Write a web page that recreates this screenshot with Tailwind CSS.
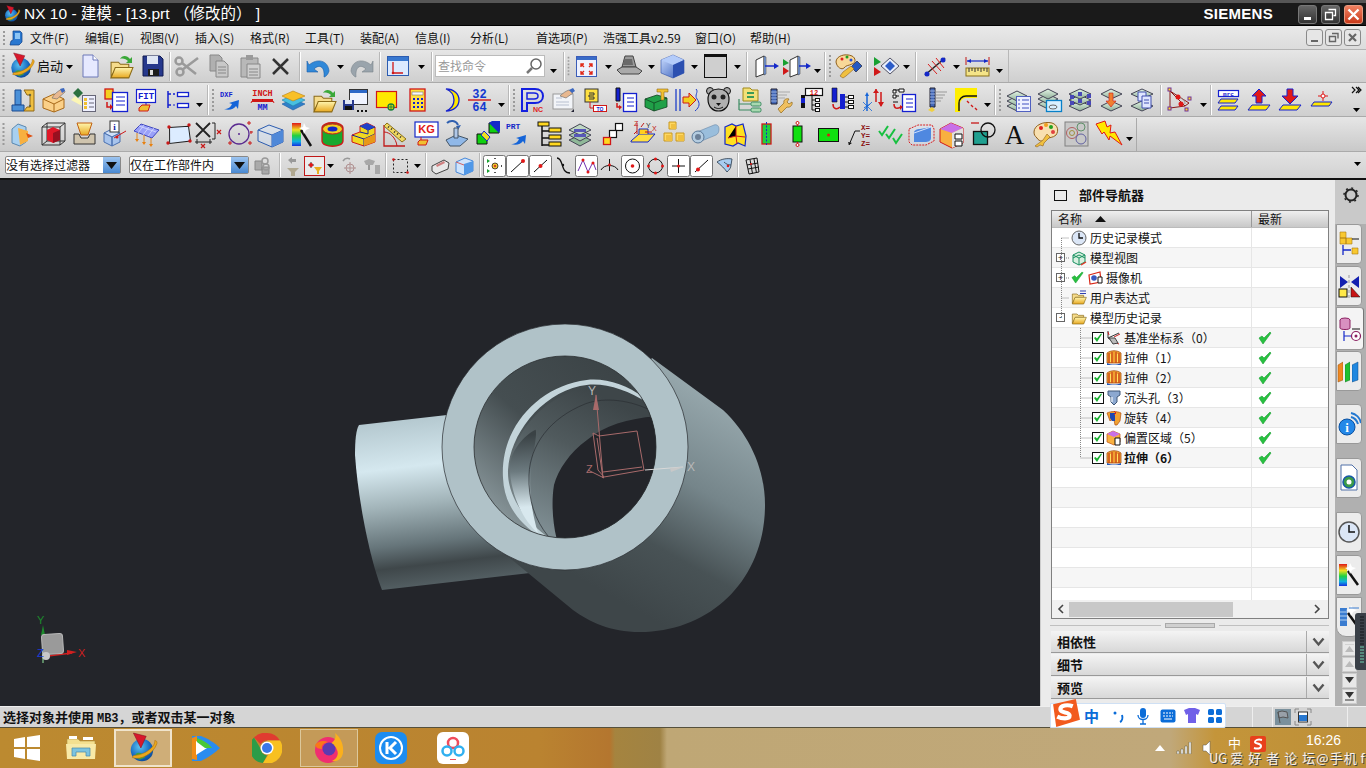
<!DOCTYPE html>
<html lang="zh">
<head>
<meta charset="UTF-8">
<title>NX 10 - 建模</title>
<script src="https://cdn.jsdelivr.net/npm/@tailwindcss/browser@4"></script>
</head>
<body class="bg-[#d8d8d8]">
<!-- shared icons -->
<svg width="0" height="0" class="absolute">
  <defs>
    <radialGradient id="gb" cx=".4" cy=".35" r=".8"><stop offset="0" stop-color="#5cc4f0"/><stop offset=".6" stop-color="#1466c0"/><stop offset="1" stop-color="#0a3c80"/></radialGradient>
    <linearGradient id="gy" x1="0" y1="0" x2="0" y2="1"><stop offset="0" stop-color="#fff6b0"/><stop offset="1" stop-color="#e8a820"/></linearGradient>
    <linearGradient id="gl" x1="0" y1="0" x2="1" y2="1"><stop offset="0" stop-color="#cfe0ff"/><stop offset="1" stop-color="#3058b8"/></linearGradient>
    <linearGradient id="gs" x1="0" y1="0" x2="0" y2="1"><stop offset="0" stop-color="#e4f6e6"/><stop offset="1" stop-color="#8fae98"/></linearGradient>
    <linearGradient id="rb" x1="0" y1="0" x2="0" y2="1"><stop offset="0" stop-color="#e01818"/><stop offset=".3" stop-color="#f0e020"/><stop offset=".55" stop-color="#20d040"/><stop offset=".8" stop-color="#10b0e0"/><stop offset="1" stop-color="#1430e0"/></linearGradient>
    <symbol id="nx" viewBox="0 0 30 30">
      <circle cx="14" cy="17" r="10.500" fill="url(#gb)"/><path d="M8 21c3-3 7-1 9 3l-5 2c-3-1-4-3-4-5z" fill="#3fa040"/>
      <path d="M5 24c8 3 20-4 23-13 .5-2-.5-3-2-3 1 6-10 14-20 14z" fill="#eaa81c" stroke="#a86c10" stroke-width=".5"/>
      <path d="M6 1l12 3-5 11z" fill="#d8182c" stroke="#801020" stroke-width=".5"/>
    </symbol>
    <symbol id="fo" viewBox="0 0 24 24">
      <path d="M2 20V6h7l2 2h8v3H7z" fill="#f6dc8c" stroke="#8a6a18"/><path d="M2 21l4-10h17l-4 10z" fill="url(#gy)" stroke="#8a6a18"/>
    </symbol>
    <symbol id="ex" viewBox="0 0 16 16">
      <path d="M1 3c4-3 10-3 14 0v10H1z" fill="#f0a030" stroke="#a85010" stroke-width=".8"/><path d="M3 3v10M6 2v11M10 2v11M13 3v10" stroke="#c02c10"/><path d="M1 13c4 2 10 2 14 0v2H1z" fill="#2458b8"/><path d="M4 4h1v8H4zM11 4h1v8h-1z" fill="#ffe060"/>
    </symbol>
    <symbol id="ck" viewBox="0 0 14 14"><path d="M1 7l4 6 8-11-1-1-6 6-2-2z" fill="#28c040" stroke="#18a030" stroke-width=".6"/></symbol>
    <symbol id="cb" viewBox="0 0 12 12"><rect x=".5" y=".5" width="11" height="11" fill="#fff" stroke="#111"/><path d="M2 6l3 4 5-8-1-.5-4 5-1.500-1.500z" fill="#18b030"/></symbol>
    <symbol id="bx" viewBox="0 0 23 27"><rect x=".5" y="3.500" width="22" height="21" rx="2" fill="#fff" stroke="#777"/></symbol>
    <symbol id="sg" viewBox="0 0 30 30">
      <path d="M3 6l22-5 4 20-23 7z" fill="#f25a1e"/><path d="M22 8c-5-2-12-1-12 3s9 2 9 6-8 3-12 1" fill="none" stroke="#fff" stroke-width="4"/>
    </symbol>
    <symbol id="dt" viewBox="0 0 6 32"><path d="M3 5v23" stroke="#9a9a9a" stroke-width="2" stroke-dasharray="2 2"/></symbol>
  </defs>
</svg>

<div class="relative w-[1366px] h-[768px] overflow-hidden flex flex-col font-['Noto_Sans_CJK_SC','Liberation_Sans',sans-serif] text-[12px] text-[#111]">

  <!-- title bar -->
  <div class="h-[26px] shrink-0 flex items-center bg-[#1a1a1a] border-t-[3px] border-[#565656] border-b border-b-black text-white">
    <svg width="18" height="18" class="ml-[3px] mr-[3px]"><use href="#nx"/></svg>
    <span class="font-['Liberation_Sans','Noto_Sans_CJK_SC',sans-serif] text-[15.5px]">NX 10 - 建模 - [13.prt （修改的） ]</span>
    <span class="ml-auto mr-[25px] font-['Liberation_Sans',sans-serif] font-bold text-[15px] tracking-[.3px]">SIEMENS</span>
    <div class="flex gap-[4px] mr-[3px]">
      <div class="w-[19px] h-[19px] rounded-[3px] bg-gradient-to-b from-[#666] to-[#333] border border-[#777] flex items-end justify-center pb-[3px]"><b class="block w-[7px] h-[3px] bg-white"></b></div>
      <div class="w-[19px] h-[19px] rounded-[3px] bg-gradient-to-b from-[#666] to-[#333] border border-[#777]"><svg width="17" height="17"><path d="M6.500 3.500h7v6h-2M3.500 6.500h7v7h-7z" fill="none" stroke="#fff" stroke-width="1.300"/></svg></div>
      <div class="w-[19px] h-[19px] rounded-[3px] bg-gradient-to-b from-[#f08060] to-[#c83818] border border-[#e89a80]"><svg width="17" height="17"><path d="M3.500 3.500l10 10M13.500 3.500l-10 10" stroke="#fff" stroke-width="2.400"/></svg></div>
    </div>
  </div>

  <!-- menu bar -->
  <div class="h-[24px] shrink-0 flex items-center bg-gradient-to-b from-[#e9e9e9] to-[#dcdcdc] border-b border-[#b4b4b4] *:shrink-0">
    <svg width="8" height="20" viewBox="0 0 6 20"><path d="M3 3v15" stroke="#9a9a9a" stroke-width="2" stroke-dasharray="2 2"/></svg>
    <svg width="16" height="16" viewBox="0 0 16 16" class="mr-[6px]"><path d="M5 1h7l2 2v9l-3 3H2l1-4 2-1z" fill="#2a78d0" stroke="#0e3f88" stroke-width=".7"/><path d="M7 3h5v6H7z" fill="#8cc4f4"/></svg>
    <span class="w-[55px]">文件(F)</span><span class="w-[55px]">编辑(E)</span><span class="w-[55px]">视图(V)</span><span class="w-[55px]">插入(S)</span><span class="w-[55px]">格式(R)</span><span class="w-[55px]">工具(T)</span><span class="w-[55px]">装配(A)</span><span class="w-[55px]">信息(I)</span><span class="w-[66px]">分析(L)</span><span class="w-[67px]">首选项(P)</span><span class="w-[92px]">浩强工具v2.59</span><span class="w-[55px]">窗口(O)</span><span>帮助(H)</span>
    <div class="ml-auto mr-[5px] flex gap-[2px] *:w-[17px] *:h-[17px] *:rounded-[3px] *:border *:border-[#8a8a8a] *:bg-[#e6e6e6]">
      <div><svg width="15" height="15"><path d="M4 11h7" stroke="#666" stroke-width="2"/></svg></div>
      <div><svg width="15" height="15"><path d="M6 3.500h6v5M3.500 6.500h6v5h-6z" fill="none" stroke="#666" stroke-width="1.400"/></svg></div>
      <div><svg width="15" height="15"><path d="M4 4l7 7M11 4l-7 7" stroke="#666" stroke-width="2.200"/></svg></div>
    </div>
  </div>

  <!-- toolbar row 1 -->
  <div class="h-[33px] shrink-0 flex items-center bg-gradient-to-b from-[#e6e6e6] to-[#cfcfcf] border-b border-[#aaa] *:shrink-0">
    <svg width="7" height="32"><use href="#dt"/></svg>
    <svg width="30" height="32" viewBox="0 0 30 32"><use href="#nx" x="1" y="2" width="28" height="28"/></svg>
    <span class="w-[26px] text-[13px]">启动</span>
    <svg width="12" height="32"><path d="M3 15h7l-3.500 4z"/></svg>
    <svg width="31" height="32"><path d="M8 5h10l5 5v17H8z" fill="#e6e9ff" stroke="#6c78b8"/><path d="M18 5v5h5" fill="#fff" stroke="#6c78b8"/></svg>
    <svg width="31" height="32"><use href="#fo" x="3" y="6" width="25" height="25"/><path d="M14 9c2-4 7-4 10 0l2-2v6h-6l2-2c-2-2-5-3-8-2z" fill="#3aa838"/></svg>
    <svg width="31" height="32"><path d="M6 6h17l3 3v17H6z" fill="#26388c" stroke="#111a50"/><path d="M10 6h11v8H10z" fill="#dfe6f4"/><path d="M11 19h11v7H11z" fill="#1c1c1c"/><path d="M13 20h3v5h-3z" fill="#ddd"/></svg>
    <div class="w-[4px] flex justify-center"><b class="block w-[2px] h-[29px] border-l border-[#b8b8b8] bg-white"></b></div>
    <svg width="31" height="32"><g fill="none" stroke="#9a9a9a" stroke-width="2.500"><circle cx="8" cy="22" r="3.500"/><circle cx="7" cy="11" r="3.500"/><path d="M10 20L26 8M10 13l14 11"/></g></svg>
    <svg width="31" height="32"><path d="M7 5h9l3 3v13H7z" fill="#b0b0b0" stroke="#888"/><path d="M13 11h8l4 4v12H13z" fill="#c8c8c8" stroke="#888"/><path d="M15 17h8M15 20h8M15 23h8" stroke="#888"/></svg>
    <svg width="31" height="32"><path d="M7 8h17v19H7z" fill="#b8b8b8" stroke="#888"/><path d="M12 5h7v5h-7z" fill="#9a9a9a"/><path d="M13 14h13v14H13z" fill="#cfcfcf" stroke="#888"/><path d="M15 19h9M15 22h9M15 25h9" stroke="#888"/></svg>
    <svg width="31" height="32"><path d="M8 9l15 15M23 9L8 24" stroke="#333" stroke-width="2.500"/></svg>
    <div class="w-[7px] flex justify-center"><b class="block w-[2px] h-[29px] border-l border-[#b8b8b8] bg-white"></b></div>
    <svg width="31" height="32"><path d="M26 21C25 10 14 8 6 15l-2-4v11h11l-4-3c5-5 11-3 10 8 1 0 4-2 5-6z" fill="#3088d8" stroke="#1a5ca8" stroke-width=".6"/></svg>
    <svg width="12" height="32"><path d="M3 15h7l-3.500 4z"/></svg>
    <svg width="31" height="32"><path d="M5 21C6 10 17 8 25 15l2-4v11H16l4-3c-5-5-11-3-10 8-1 0-4-2-5-6z" fill="#9aa4ac" stroke="#7a848c" stroke-width=".6"/></svg>
    <div class="w-[6px] flex justify-center"><b class="block w-[2px] h-[29px] border-l border-[#b8b8b8] bg-white"></b></div>
    <svg width="31" height="32"><rect x="4.500" y="6.500" width="21" height="19" fill="#dceaff" stroke="#2c5cb0"/><path d="M5 7h20v4H5z" fill="#3878d0"/><path d="M10 12v11h10" fill="none" stroke="#d01818" stroke-width="1.300"/><circle cx="10" cy="23" r="1.300" fill="#d01818"/></svg>
    <svg width="14" height="32"><path d="M4 15h7l-3.500 4z"/></svg>
    <div class="w-[7px] flex justify-center"><b class="block w-[2px] h-[29px] border-l border-[#b8b8b8] bg-white"></b></div>
    <div class="w-[110px] h-[22px] bg-white border border-[#bbb] flex items-center pl-[2px] justify-between text-[#999]">查找命令
      <svg width="20" height="20"><circle cx="12" cy="8" r="5" fill="#fff" stroke="#666" stroke-width="1.500"/><path d="M8 12l-5 5" stroke="#777" stroke-width="2.500"/></svg>
    </div>
    <svg width="16" height="32"><path d="M5 19h7l-3.500 4z"/></svg>
    <div class="w-[5px] flex justify-center"><b class="block w-[2px] h-[29px] border-l border-[#b8b8b8] bg-white"></b></div>
    <svg width="5" height="32" viewBox="0 0 6 32"><use href="#dt"/></svg>
    <svg width="31" height="32"><rect x="5.500" y="6.500" width="20" height="20" fill="#eef2ff" stroke="#3a5cb8"/><path d="M6 7h19v3H6z" fill="#3a6cc8"/><path d="M10 14l3 3m-3 0v-3h3M21 14l-3 3m3 0v-3h-3M10 24l3-3m-3 0v3h3M21 24l-3-3m3 0v3h-3" fill="none" stroke="#e02818" stroke-width="1.400"/></svg>
    <svg width="12" height="32"><path d="M3 15h7l-3.500 4z"/></svg>
    <svg width="31" height="32"><path d="M11 6h8l3 11H8z" fill="#9a9a9a" stroke="#444"/><path d="M3 20l5-3h14l6 4-3 3H7z" fill="#aaa" stroke="#444"/><path d="M10 9h8l1 6H9z" fill="#6a6a6a"/></svg>
    <svg width="12" height="32"><path d="M3 15h7l-3.500 4z"/></svg>
    <svg width="31" height="32"><path d="M4 10l12-5 11 5v13l-11 5-12-5z" fill="url(#gl)" stroke="#2c4ea8" stroke-width=".6"/><path d="M4 10l12 5 11-5-11-5z" fill="#b4ccfa"/><path d="M16 15v13l11-5V10z" fill="#2c50b0"/></svg>
    <svg width="12" height="32"><path d="M3 15h7l-3.500 4z"/></svg>
    <svg width="31" height="32"><rect x="4.500" y="4.500" width="22" height="23" fill="#cfcfcf" stroke="#111"/><path d="M4 4h23v3H4z" fill="#111"/></svg>
    <svg width="12" height="32"><path d="M3 15h7l-3.500 4z"/></svg>
    <div class="w-[7px] flex justify-center"><b class="block w-[2px] h-[29px] border-l border-[#b8b8b8] bg-white"></b></div>
    <svg width="31" height="32"><path d="M6 10l8-4v18l-8 3z" fill="#fff" stroke="#333"/><path d="M14 6l2 1v17l-2 1z" fill="#7ea4e8" stroke="#333" stroke-width=".5"/><path d="M15 16h11" stroke="#1428c8" stroke-width="1.500"/><path d="M24 13l5 3-5 3z" fill="#1428c8"/></svg>
    <svg width="31" height="32"><path d="M2 9l6 4-6 3z" fill="#18a030"/><path d="M2 17l6 4-6 4z" fill="#d01818"/><path d="M9 10l8-4v18l-8 3z" fill="#fff" stroke="#333"/><path d="M17 6l2 1v17l-2 1z" fill="#7ea4e8" stroke="#333" stroke-width=".5"/><path d="M18 16h9" stroke="#1428c8" stroke-width="1.500"/><path d="M25 13l5 3-5 3z" fill="#1428c8"/></svg>
    <svg width="11" height="32"><path d="M2 19h7l-3.500 4z"/></svg>
    <div class="w-[4px] flex justify-center"><b class="block w-[2px] h-[29px] border-l border-[#b8b8b8] bg-white"></b></div>
    <svg width="6" height="32"><use href="#dt"/></svg>
    <svg width="31" height="32"><path d="M3 12C3 6 12 3 19 6c4 2 4 7 0 8-4 2-6 1-8 4-2 2-7 0-8-6z" fill="#f8d898" stroke="#90601c"/><circle cx="9" cy="9" r="1.500" fill="#e02020"/><circle cx="14" cy="7" r="1.500" fill="#20a020"/><circle cx="18" cy="10" r="1.500" fill="#2050e0"/><path d="M18 17l6-6 5 5-6 6z" fill="#2458c0" stroke="#112" stroke-width=".6"/><path d="M10 22l8-6 3 3-8 7-3 2-3-2z" fill="#f0c040" stroke="#90601c" stroke-width=".6"/></svg>
    <div class="w-[5px] flex justify-center"><b class="block w-[2px] h-[29px] border-l border-[#b8b8b8] bg-white"></b></div>
    <svg width="31" height="32"><path d="M5 7l7 5-7 4z" fill="#18a030"/><path d="M5 17l7 5-7 4z" fill="#d01818"/><path d="M12 16l9-8 9 8-9 8z" fill="#e8eefc" stroke="#556"/><path d="M16 16l5-5 5 5-5 5z" fill="#2c5cc8"/></svg>
    <svg width="13" height="32"><path d="M3 15h7l-3.500 4z"/></svg>
    <div class="w-[6px] flex justify-center"><b class="block w-[2px] h-[29px] border-l border-[#b8b8b8] bg-white"></b></div>
    <svg width="31" height="32"><path d="M6 25L26 8" stroke="#222" stroke-width="1.500"/><path d="M9 14l9 10M13 11l9 10M17 8l8 10" stroke="#d82020"/><circle cx="24" cy="10" r="2.500" fill="#1428c8"/><circle cx="8" cy="24" r="2.500" fill="#1428c8"/></svg>
    <svg width="12" height="32"><path d="M3 15h7l-3.500 4z"/></svg>
    <svg width="31" height="32"><path d="M4 7v8M27 7v8" stroke="#c01818"/><path d="M5 11h21" stroke="#1428c8" stroke-width="1.200"/><path d="M5 11l4-2v4zM26 11l-4-2v4z" fill="#1428c8"/><rect x="4" y="18" width="23" height="8" fill="#f4e488" stroke="#8a7018"/><path d="M7 18v4M10 18v3M13 18v4M16 18v3M19 18v4M22 18v3M25 18v4" stroke="#333"/></svg>
    <svg width="12" height="32"><path d="M3 19h7l-3.500 4z"/></svg>
    <div class="w-[4px] h-[32px] border-r border-[#b8b8b8]"></div>
  </div>

  <!-- toolbar row 2 -->
  <div class="h-[34px] shrink-0 flex items-center bg-gradient-to-b from-[#e6e6e6] to-[#cfcfcf] border-b border-[#aaa] *:shrink-0">
    <svg width="7" height="32"><use href="#dt"/></svg>
    <svg width="31" height="32"><path d="M8 6h6v15H8z" fill="#4a90d8" stroke="#1a4a90"/><path d="M5 21h12v6H5z" fill="#4a90d8" stroke="#1a4a90"/><path d="M17 6h10v21H17l3-4h3V11h-3z" fill="#f0c040" stroke="#906818"/><circle cx="23" cy="11" r="1.200" fill="#664"/><circle cx="23" cy="22" r="1.200" fill="#664"/></svg>
    <svg width="31" height="32"><path d="M5 15l11-5 10 5v9l-10 4-11-4z" fill="#fbd088" stroke="#a86818"/><path d="M5 15l11 5 10-5M16 20v8" fill="none" stroke="#a86818"/><path d="M14 14c2-4 6-7 10-9 2 0 3 2 3 3l-8 7z" fill="#e8b890" stroke="#666" stroke-width=".6"/><path d="M22 5l4-1 1 3-3 2z" fill="#3c68c0"/></svg>
    <svg width="31" height="32"><path d="M4 9l5-5 5 5-5 5z" fill="#2c7040"/><path d="M6 12l10 8-1 3-13-7z" fill="#fff8b0" opacity=".9"/><rect x="13.500" y="11.500" width="13" height="16" fill="#eef0ff" stroke="#667"/><path d="M20 15h5M20 19h5M20 23h5" stroke="#667"/><path d="M15 14h3v3h-3zM15 18h3v3h-3zM15 22h3v3h-3z" fill="#f0c030"/></svg>
    <svg width="31" height="32"><rect x="5" y="5" width="8" height="10" fill="#f4d020" stroke="#d01818" stroke-width="1.300"/><rect x="12.500" y="8.500" width="15" height="19" fill="#fff" stroke="#1420d0" stroke-width="1.300"/><path d="M16 13h9M16 17h9M16 21h9" stroke="#1420d0"/><path d="M7 18v5h4" fill="none" stroke="#d01818" stroke-width="1.500"/><path d="M10 20l3 3-3 3z" fill="#d01818"/></svg>
    <svg width="31" height="32"><rect x="5.500" y="5.500" width="19" height="13" fill="#fff" stroke="#1420d0" stroke-width="1.200"/><text x="15" y="15" text-anchor="middle" font-size="9" font-family="Liberation Mono" font-weight="700" fill="#1420d0">FIT</text><path d="M15 18v5" stroke="#1420d0"/><path d="M8 24l3-3h8l-2 6H8z" fill="#f0c030" stroke="#d01818"/></svg>
    <svg width="31" height="32"><path d="M6 7v17M6 10h3M6 21h3" stroke="#1420d0" stroke-width="1.500"/><path d="M11 10h2M12 9v2" stroke="#1420d0"/><path d="M11 21h2" stroke="#1420d0"/><rect x="15.500" y="8.500" width="11" height="4" fill="#fff" stroke="#1420d0" stroke-width="1.300"/><rect x="15.500" y="19.500" width="11" height="4" fill="#fff" stroke="#1420d0" stroke-width="1.300"/></svg>
    <svg width="13" height="32"><path d="M3 19h7l-3.500 4z"/></svg>
    <div class="w-[4px] flex justify-center"><b class="block w-[2px] h-[30px] border-l border-[#b8b8b8] bg-white"></b></div>
    <svg width="6" height="32"><use href="#dt"/></svg>
    <svg width="31" height="32"><text x="4" y="13" font-size="7" font-family="Liberation Mono" font-weight="700" fill="#1420d0">DXF</text><path d="M8 25c4 0 7-2 8-5l-3-1 10-3-1 9-2-3c-2 3-7 5-12 3z" fill="#1464d8"/></svg>
    <svg width="31" height="32"><text x="15.500" y="12" text-anchor="middle" font-size="8.500" font-family="Liberation Mono" font-weight="700" fill="#d01818">INCH</text><path d="M5 15h21v3H5z" fill="#d01818"/><path d="M5 17l-1 2M26 17l1 2" stroke="#d01818"/><text x="15.500" y="26" text-anchor="middle" font-size="8.500" font-family="Liberation Mono" font-weight="700" fill="#1420d0">MM</text></svg>
    <svg width="31" height="32"><path d="M4 20l11-5 12 5-12 6z" fill="#3080c8" stroke="#1a5ca8" stroke-width=".6"/><path d="M4 16l11-5 12 5-12 6z" fill="#48c0e0" stroke="#1a80a8" stroke-width=".6"/><path d="M4 12l11-5 12 5-12 5z" fill="#f8c028" stroke="#b88010" stroke-width=".6"/></svg>
    <svg width="31" height="32"><use href="#fo" x="3" y="6" width="25" height="25"/><path d="M14 9c2-4 7-4 10 0l2-2v6h-6l2-2c-2-2-5-3-8-2z" fill="#3aa838"/></svg>
    <svg width="31" height="32"><rect x="9.500" y="5.500" width="18" height="15" fill="#f0f4ff" stroke="#333"/><path d="M10 6h17v3H10z" fill="#2c68c8"/><path d="M3 16h11v10H3z" fill="#26388c"/><path d="M5 16h7v4H5z" fill="#dfe6f4"/><path d="M5 22h7v4H5z" fill="#111"/><path d="M17 26h2v2h-2zM21 26h2v2h-2zM25 26h2v2h-2z" fill="#111"/></svg>
    <svg width="31" height="32"><rect x="5.500" y="7.500" width="20" height="16" fill="#ffe800" stroke="#d01818" stroke-width="1.200"/><circle cx="20" cy="23" r="3" fill="#ffe800" stroke="#18803c" stroke-width="1.300"/><path d="M17 23h6M20 20v6" stroke="#18803c"/></svg>
    <svg width="31" height="32"><rect x="8" y="5" width="15" height="22" fill="#ffe040" stroke="#d01818" stroke-width="1.300"/><rect x="10" y="8" width="11" height="3" fill="#f8f8f8" stroke="#777" stroke-width=".6"/><path d="M11 14h2v2h-2zM15 14h2v2h-2zM19 14h2v2h-2zM11 18h2v2h-2zM15 18h2v2h-2zM19 18h2v2h-2zM11 22h2v2h-2zM15 22h2v2h-2zM19 22h2v2h-2z" fill="#1420d0"/></svg>
    <svg width="31" height="32"><path d="M13 5c8 0 13 5 13 11s-5 11-13 11c5-2 8-6 8-11s-3-9-8-11z" fill="#ffe800" stroke="#1420d0" stroke-width="1.300"/></svg>
    <svg width="31" height="32"><text x="15.500" y="14" text-anchor="middle" font-size="12" font-family="Liberation Mono" font-weight="700" fill="#1438d0">32</text><path d="M4 16h23" stroke="#d01818" stroke-width="1.400"/><text x="15.500" y="27" text-anchor="middle" font-size="12" font-family="Liberation Mono" font-weight="700" fill="#1438d0">64</text></svg>
    <svg width="12" height="32"><path d="M3 19h7l-3.500 4z"/></svg>
    <div class="w-[4px] flex justify-center"><b class="block w-[2px] h-[30px] border-l border-[#b8b8b8] bg-white"></b></div>
    <svg width="6" height="32"><use href="#dt"/></svg>
    <svg width="31" height="32"><path d="M5 27V5h13c5 0 8 3 8 7s-3 7-8 7h-8v8z" fill="none" stroke="#1420e0" stroke-width="2"/><path d="M10 9h7c3 0 4 1 4 3s-1 3-4 3h-7z" fill="none" stroke="#1420e0" stroke-width="1.500"/><text x="16" y="28" font-size="7" font-family="Liberation Sans" font-weight="700" fill="#e02020">NC</text></svg>
    <svg width="31" height="32"><rect x="5" y="10" width="20" height="15" fill="#f2f4f8" stroke="#999"/><path d="M8 14h6M8 18h13M8 21h13" stroke="#b8c0d0"/><path d="M12 12c3-3 6-5 9-6l4 3-7 5z" fill="#e8b890" stroke="#666" stroke-width=".6"/><path d="M21 6l4-2 2 3-3 2z" fill="#3c68c0"/><path d="M26 25l-3 3h3z" fill="#223"/></svg>
    <svg width="31" height="32"><rect x="6" y="5" width="13" height="13" fill="#ffe040" stroke="#333"/><path d="M10 9h5v2h-5v2h5v2h-5" fill="none" stroke="#333"/><path d="M11 18v6h3" stroke="#d01818" fill="none"/><rect x="14.500" y="21.500" width="13" height="6" fill="#fff" stroke="#d01818"/><text x="21" y="26.500" text-anchor="middle" font-size="5" font-weight="700" font-family="Liberation Sans" fill="#1420d0">TO</text></svg>
    <svg width="31" height="32"><path d="M6 4h4v13H6z" fill="#1420d0" stroke="#111"/><path d="M7 19v4h3" stroke="#d01818" fill="none" stroke-width="1.500"/><path d="M9 21l3 2-3 3z" fill="#d01818"/><rect x="13.500" y="9.500" width="13" height="18" fill="#fff" stroke="#1420d0" stroke-width="1.300"/><path d="M17 14h7M17 18h7M17 22h7" stroke="#1420d0"/></svg>
    <svg width="31" height="32"><path d="M4 15l12-4 10 3v9l-13 4-9-4z" fill="#20a048" stroke="#104020" stroke-width=".8"/><path d="M4 15l9 4 13-5M13 19v8" fill="none" stroke="#104020" stroke-width=".8"/><path d="M16 5h11v3h-4v8h-3V8h-4z" fill="#f0c030" stroke="#906818" stroke-width=".6"/></svg>
    <svg width="31" height="32"><path d="M4 5v22M8 5v22" stroke="#2040c8" stroke-width="1.300"/><path d="M11 13h6V9l7 7-7 7v-4h-6z" fill="#f0d020" stroke="#d01818"/><path d="M24 5c3 3-2 6 1 10s3 8-2 12" fill="none" stroke="#2040c8"/></svg>
    <svg width="31" height="32"><circle cx="7" cy="7" r="3.500" fill="#aaa" stroke="#111"/><circle cx="24" cy="7" r="3.500" fill="#aaa" stroke="#111"/><path d="M5 15C5 8 10 5 15.500 5S26 8 26 15c0 8-5 12-10.500 12S5 23 5 15z" fill="#b0b0b0" stroke="#111" stroke-width="1.200"/><circle cx="11" cy="13" r="2.500" fill="#222"/><circle cx="20" cy="13" r="2.500" fill="#222"/><path d="M13 19h5l-2.500 3z" fill="#111"/><path d="M11 23c3 2 6 2 9 0" stroke="#111" fill="none"/></svg>
    <svg width="31" height="32"><path d="M9 4h7l2 2h6v11H9z" fill="#f2e078" stroke="#a08818"/><path d="M13 8h7v2h-7zM13 12h7v2h-7z" fill="#3a9a58"/><path d="M5 15v11M5 20h12M5 26h12" stroke="#3a8a60" stroke-width="1.200"/><rect x="17" y="18" width="10" height="4" rx="1.500" fill="#a8d8b0" stroke="#3a8a60"/><rect x="17" y="24" width="10" height="4" rx="1.500" fill="#a8d8b0" stroke="#3a8a60"/></svg>
    <svg width="31" height="32"><path d="M6 5h6v15H6z" fill="#4468b8" stroke="#223"/><path d="M6 8h6M6 11h6M6 14h6M6 17h6" stroke="#98b0e0"/><path d="M13 8h12M13 11h9M13 14h7" stroke="#aaa"/><path d="M13 25l6-6c-1-3 2-5 5-4l-2 3 2 2 3-2c1 3-2 6-5 5l-6 6z" fill="#f0c060" stroke="#906818" stroke-width=".7"/></svg>
    <svg width="31" height="32"><rect x="9.500" y="4.500" width="17" height="7" fill="#fff" stroke="#111" stroke-width="1.200"/><text x="18" y="11" text-anchor="middle" font-size="7" font-family="Liberation Mono" font-weight="700" fill="#d01818">12</text><path d="M5 11h4v13H5z" fill="#111"/><path d="M5 14h4v5H5z" fill="#1420d0"/><path d="M16 12v14M16 16h3M16 21h3M16 26h3" stroke="#111"/><rect x="19.500" y="14.500" width="4" height="3" fill="#fff" stroke="#111"/><rect x="19.500" y="19.500" width="4" height="3" fill="#fff" stroke="#111"/><rect x="19.500" y="24.500" width="4" height="3" fill="#fff" stroke="#111"/></svg>
    <svg width="31" height="32"><path d="M5 4h5v14H5z" fill="#1420d0" stroke="#111" stroke-width=".6"/><path d="M6 20c0 5 4 6 7 3" fill="none" stroke="#d01818" stroke-width="1.500"/><path d="M13 10h5v15h-5z" fill="#1420d0"/><path d="M18 13h3M18 18h3M18 23h3" stroke="#111"/><rect x="21.500" y="11.500" width="5" height="3" fill="#fff" stroke="#111"/><rect x="21.500" y="16.500" width="5" height="3" fill="#fff" stroke="#111"/><rect x="21.500" y="21.500" width="5" height="3" fill="#fff" stroke="#111"/></svg>
    <svg width="31" height="32"><path d="M9 27V10" stroke="#1464d8" stroke-width="1.500"/><path d="M6 24l6-4" stroke="#1464d8"/><path d="M7 12l2-4 2 4z" fill="#1464d8"/><path d="M5 18l9 9M5 27l9-9" stroke="#1464d8" stroke-width=".8"/><path d="M18 18V5M23 8v14" stroke="#d01818" stroke-width="1.500"/><path d="M15 9l3-4 3 4zM20 18l3 5 3-5z" fill="#d01818"/></svg>
    <svg width="31" height="32"><path d="M4 6h8M4 12h6M4 18h5" stroke="#111"/><path d="M4 6h3v3H4zM4 11h3v3H4z" fill="#fff" stroke="#111"/><path d="M10 5h5v3h-5z" fill="#fff" stroke="#111"/><rect x="13.500" y="10.500" width="13" height="17" fill="#fff" stroke="#1420d0" stroke-width="1.300"/><path d="M17 15h7M17 19h7M17 23h7" stroke="#1420d0"/><path d="M5 20c0 5 3 5 7 3" fill="none" stroke="#d01818" stroke-width="1.500"/><path d="M11 21l3 2-3 3z" fill="#d01818"/></svg>
    <svg width="31" height="32"><path d="M10 4h5v19h-5z" fill="#4468b8" stroke="#223"/><path d="M10 7h5M10 10h5M10 13h5M10 16h5M10 19h5" stroke="#98b0e0"/><path d="M16 8h11M16 11h9M16 14h7M16 17h5" stroke="#999"/><path d="M8 26l4-3 3 3-3 2z" fill="#f0d040"/></svg>
    <svg width="31" height="32"><path d="M4 4h22v10H15c-3 0-6 3-6 6v8H4z" fill="#ffee00"/><path d="M8 27v-8c0-4 3-7 7-7h11" fill="none" stroke="#111" stroke-width="1.400"/><path d="M16 17l2 2M20 21l2 2M24 24l2 2" stroke="#d01818" stroke-width="1.400"/></svg>
    <svg width="11" height="32"><path d="M2 19h7l-3.500 4z"/></svg>
    <div class="w-[4px] flex justify-center"><b class="block w-[2px] h-[30px] border-l border-[#b8b8b8] bg-white"></b></div>
    <svg width="6" height="32"><use href="#dt"/></svg>
    <svg width="31" height="32"><path d="M4 22l10-5 10 5-10 5z" fill="url(#gs)" stroke="#445"/><path d="M4 17l10-5 10 5-10 5z" fill="url(#gs)" stroke="#445"/><path d="M4 12l10-5 10 5-10 5z" fill="url(#gs)" stroke="#445"/><rect x="13.500" y="12.500" width="14" height="15" fill="#eef0ff" stroke="#5060c0"/><path d="M15 16h2M15 20h2M15 24h2M19 16h7M19 20h7M19 24h7" stroke="#4050c0"/></svg>
    <svg width="31" height="32"><path d="M4 20l10-5 10 5-10 5z" fill="url(#gs)" stroke="#445"/><path d="M4 15l10-5 10 5-10 5z" fill="url(#gs)" stroke="#445"/><path d="M4 10l10-5 10 5-10 5z" fill="url(#gs)" stroke="#445"/><rect x="12.500" y="16.500" width="15" height="11" fill="#d8f0ff" stroke="#0880c8" stroke-width="1.300"/><ellipse cx="19" cy="23" rx="4" ry="2" fill="none" stroke="#666"/></svg>
    <svg width="31" height="32"><path d="M4 22l11-5 11 5-11 5z" fill="url(#gs)" stroke="#445"/><path d="M4 16l11-5 11 5-11 5z" fill="url(#gs)" stroke="#445"/><path d="M4 10l11-5 11 5-11 5z" fill="url(#gs)" stroke="#445"/><path d="M13 8h4v4h-4zM5 11h4v4H5zM22 10h4v4h-4zM13 15h4v4h-4zM5 17h4v4H5zM22 17h4v4h-4z" fill="#4848b8"/></svg>
    <svg width="31" height="32"><path d="M5 10l10-5 11 5-11 5z" fill="url(#gs)" stroke="#445"/><path d="M5 22l10-5 11 5-11 5z" fill="url(#gs)" stroke="#445"/><path d="M13 9h4v8h3l-5 6-5-6h3z" fill="#f08030" stroke="#d01818" stroke-width=".6"/></svg>
    <svg width="31" height="32"><path d="M4 22l11-5 11 5-11 5z" fill="url(#gs)" stroke="#445"/><path d="M4 10l11-5 11 5-11 5z" fill="url(#gs)" stroke="#445"/><path d="M11 8h8v9h-8z" fill="#dfe6ff" stroke="#4050b0"/><path d="M15 12h9v12h-9z" fill="#dfe6ff" stroke="#4050b0"/><path d="M17 16h5M17 19h5" stroke="#4050b0"/></svg>
    <div class="w-[5px] flex justify-center"><b class="block w-[2px] h-[30px] border-l border-[#b8b8b8] bg-white"></b></div>
    <svg width="31" height="32"><path d="M7 7l15 15M7 7v17l15-2M7 7l19 12-4 3" fill="none" stroke="#8a1818"/><path d="M14 13c4 0 8 3 8 7" fill="none" stroke="#999"/><circle cx="15" cy="13" r="2.500" fill="#e01818"/><circle cx="18" cy="20" r="2.500" fill="#e01818"/><g fill="#ffd820" stroke="#70309a"><rect x="5" y="4" width="3" height="3"/><rect x="25" y="13" width="3" height="3"/><rect x="5" y="23" width="3" height="3"/><rect x="22" y="24" width="3" height="3"/></g></svg>
    <svg width="15" height="32"><path d="M6 19h7l-3.500 4z"/></svg>
    <div class="w-[4px] flex justify-center"><b class="block w-[2px] h-[30px] border-l border-[#b8b8b8] bg-white"></b></div>
    <svg width="31" height="32"><rect x="5.500" y="6.500" width="20" height="6" fill="#fff" stroke="#1420d0" stroke-width="1.200"/><text x="15.500" y="12" text-anchor="middle" font-size="6" font-weight="700" font-family="Liberation Mono" fill="#1420d0">mrc</text><path d="M8 15h17l-3 4H5zM8 22h17l-3 4H5z" fill="#ffe800" stroke="#1420d0"/></svg>
    <svg width="31" height="32"><path d="M15 5l7 7h-4v7h-6v-7H8z" fill="#e01818" stroke="#1420d0"/><path d="M8 21h18l-4 5H4z" fill="#ffe800" stroke="#1420d0"/></svg>
    <svg width="31" height="32"><path d="M12 5h6v7h5l-8 8-8-8h5z" fill="#e01818" stroke="#1420d0"/><path d="M8 21h18l-4 5H4z" fill="#ffe800" stroke="#1420d0"/></svg>
    <svg width="31" height="32"><path d="M17 7v10M12 12h10" stroke="#e01818"/><circle cx="17" cy="12" r="2" fill="#fff" stroke="#e01818"/><path d="M8 18h18l-3 4H5z" fill="#ffe800" stroke="#1420d0"/></svg>
    <div class="ml-auto w-[18px] h-[32px] flex flex-col items-center justify-between">
      <svg width="12" height="12"><path d="M1 3l3 3-3 3M5 3l3 3-3 3M7 3l3 3-3 3" fill="none" stroke="#111" stroke-width="1.200"/></svg>
      <svg width="12" height="10"><path d="M2 2h7L5.500 6z"/></svg>
    </div>
  </div>

  <!-- toolbar row 3 -->
  <div class="h-[35px] shrink-0 flex items-center bg-gradient-to-b from-[#e6e6e6] to-[#c9c9c9] border-b border-[#aaa] *:shrink-0">
    <svg width="7" height="32"><use href="#dt"/></svg>
    <svg width="31" height="32"><path d="M5 11l6-5 8 3v15l-6 4-8-3z" fill="#a8d0f0" stroke="#5a88b0"/><path d="M11 10l10 3v10l-8 4z" fill="#f8b040"/><path d="M12 16l9 4-2-5 7 3-5 2" fill="#e05010"/></svg>
    <svg width="31" height="32"><path d="M4 9h18v18H4zM9 5h18v18H9zM4 9l5-4M22 9l5-4M4 27l5-4M22 27l5-4" fill="none" stroke="#333"/><path d="M9 12l6-3 7 3v10l-7 3-6-3z" fill="#e01828"/><path d="M15 15l7-3v10l-7 3z" fill="#981020"/></svg>
    <svg width="31" height="32"><path d="M8 5h15l-4 12h-7z" fill="url(#gy)" stroke="#c06010"/><path d="M5 16h5l2 4h7l2-4h5v10H5z" fill="#cfc4ae" stroke="#333"/></svg>
    <svg width="31" height="32"><path d="M4 15l8 4 8-4-8-4z" fill="#cfe0f8" stroke="#4a70b0"/><path d="M4 15v9l8 4v-9zM20 15v9l-8 4v-9z" fill="#a8c4ec" stroke="#4a70b0"/><rect x="10" y="3" width="9" height="11" fill="#fff" stroke="#333"/><text x="14.500" y="12" text-anchor="middle" font-size="9" font-weight="700" font-family="Liberation Serif" fill="#1420a0">i</text><path d="M14 20l12-7" stroke="#d01818"/><circle cx="17" cy="19" r="1.500" fill="#d01818"/></svg>
    <svg width="31" height="32"><path d="M10 6l18 6-7 8L3 13z" fill="#9aa0f8" stroke="#4048c0"/><path d="M8 8l17 6M13 7l-6 8M18 9l-6 8M23 10l-6 8" stroke="#e0e4ff" stroke-width=".7"/><path d="M6 15v7M13 17v8M20 20v7" stroke="#e08820"/><path d="M4 21l2 3 2-3zM11 24l2 3 2-3zM18 26l2 3 2-3z" fill="#e88010"/></svg>
    <svg width="31" height="32"><path d="M8 9l19 0 1 15-21 1z" transform="rotate(-4 15 16)" fill="#dcecff" stroke="#222"/><circle cx="7" cy="9" r="1.700" fill="#c81818"/><circle cx="27" cy="7" r="1.700" fill="#c81818"/><circle cx="6" cy="25" r="1.700" fill="#c81818"/><circle cx="28" cy="23" r="1.700" fill="#c81818"/></svg>
    <svg width="31" height="32"><path d="M3 5l14 14M17 5L3 19" stroke="#222" stroke-width="1.800"/><path d="M2 24h17M4 21v5M17 21v5" stroke="#222"/><path d="M19 5h3v16h-3" fill="none" stroke="#222"/><path d="M24 12l4 4m0-4l-4 4M8 26l4 4m0-4l-4 4" stroke="#c81818" stroke-width="1.200"/></svg>
    <svg width="31" height="32"><circle cx="15" cy="16" r="10" fill="none" stroke="#5a2a90" stroke-width="1.300"/><circle cx="15" cy="16" r="1" fill="#5a2a90"/><path d="M23 5h4M25 3v4M26 14h3M27 13v3M24 25h4M26 23v4M4 25h4M6 23v4" stroke="#c81818"/></svg>
    <svg width="31" height="32"><path d="M3 12l11-5 14 5v12l-11 5-14-6z" fill="#d8e8ff" fill-opacity=".4" stroke="#2c5cb0"/><path d="M3 12l14 5 11-5M17 17v12" fill="none" stroke="#2c5cb0"/><path d="M17 17l11-5v12l-11 5z" fill="#4f88d8"/></svg>
    <svg width="31" height="32"><rect x="6" y="5" width="9" height="23" fill="url(#rb)"/><path d="M15 12l10 16" stroke="#111" stroke-width="2.500"/><path d="M18 5l2 4 4 1-4 2-2 4-1-4-4-2 4-1z" fill="#fff"/></svg>
    <svg width="31" height="32"><path d="M5 10c0-7 21-7 21 0v13c0 7-21 7-21 0z" fill="#18a830" stroke="#d01818" stroke-width="1.300"/><ellipse cx="15.500" cy="11" rx="10" ry="5" fill="#f0d020" stroke="#d01818"/><ellipse cx="15.500" cy="11" rx="5" ry="2.500" fill="#1428c8"/></svg>
    <svg width="31" height="32"><path d="M4 17l8-3V8l7-3 8 4v15l-11 4-12-4z" fill="#f0d820" stroke="#d01818"/><path d="M12 8l8 4 7-3M20 12v4l-8-2M4 17l12 4 11-5M16 21v7" fill="none" stroke="#1420a0"/><path d="M12 8l7-3 8 4-7 3z" fill="#2040c8"/><path d="M16 21l11-5v8l-11 4z" fill="#e89818"/></svg>
    <svg width="31" height="32"><path d="M5 7v21h21" fill="none" stroke="#c01818" stroke-width="1.300"/><path d="M5 14c6 0 12 6 13 14" fill="none" stroke="#c01818"/><path d="M8 5l19 16-4 3L5 8z" fill="#f0d860" stroke="#8a7018"/><path d="M10 8l-1 2M13 10l-1 2M16 13l-1 2M19 15l-1 2M22 18l-1 2" stroke="#333"/></svg>
    <svg width="31" height="32"><rect x="5" y="4" width="23" height="15" fill="#fff" stroke="#1428c8" stroke-width="1.200"/><text x="16.500" y="15" text-anchor="middle" font-size="11" font-weight="700" font-family="Liberation Sans" fill="#e01818">KG</text><path d="M11 19v3" stroke="#d01818"/><path d="M8 24l2-2h8l-2 5H8z" fill="#f0c030" stroke="#d01818"/></svg>
    <svg width="31" height="32"><path d="M6 5c3-3 9-3 11 2" fill="none" stroke="#3060b0" stroke-width="2"/><path d="M15 8l5-1-3 5z" fill="#3060b0"/><path d="M5 22l10-5 12 4-8 7H9z" fill="#90b8e8" stroke="#456"/><path d="M13 10h4v10h-4z" fill="#b0c8e8" stroke="#456"/></svg>
    <svg width="31" height="32"><path d="M17 5h10v10H17z" fill="#10d010" stroke="#111"/><path d="M5 16h10v10H5z" fill="#10d010" stroke="#111"/><path d="M12 13l6 6-3 4-6-6z" fill="#f0e020" stroke="#1428c8"/><path d="M17 5l3-2h8v9l-1 3" fill="#1428c8"/></svg>
    <svg width="31" height="32"><text x="3" y="11" font-size="8" font-family="Liberation Mono" font-weight="700" fill="#1428c8">PRT</text><path d="M8 26c4 0 7-2 8-5l-3-1 10-3-1 9-2-3c-2 3-7 5-12 3z" fill="#1464d8"/></svg>
    <svg width="31" height="32"><path d="M8 6v22M8 13h8M8 20h8M8 27h8" stroke="#111" stroke-width="1.500"/><rect x="4" y="4" width="11" height="4" fill="#ffd820" stroke="#111"/><rect x="15" y="10" width="12" height="4" fill="#ffd820" stroke="#111"/><rect x="15" y="17" width="12" height="4" fill="#ffd820" stroke="#111"/><rect x="15" y="24" width="12" height="4" fill="#ffd820" stroke="#111"/></svg>
    <svg width="31" height="32"><path d="M4 22l11-5 11 5-11 6z" fill="#8fb898" stroke="#445"/><path d="M4 17l11-5 11 5-11 6z" fill="#a8c8b0" stroke="#445"/><path d="M4 12l11-6 11 6-11 5z" fill="#c0d8c4" stroke="#445"/><path d="M9 11h12v3H9zM9 16h12v3H9z" fill="#5858b8"/></svg>
    <svg width="31" height="32"><rect x="19.500" y="5.500" width="7" height="7" fill="#fff" stroke="#111" stroke-width="1.200"/><rect x="13.500" y="12.500" width="7" height="7" fill="#fff" stroke="#111" stroke-width="1.200"/><rect x="7.500" y="19.500" width="7" height="7" fill="#ffd820" stroke="#d01818" stroke-width="1.300"/></svg>
    <svg width="31" height="32"><path d="M4 23l8-7h16l-7 8H4z" fill="#ffe040" stroke="#1428c8"/><path d="M12 16v-5h9v5" fill="#ffd020" stroke="#1428c8"/><path d="M10 5v11M10 13l-3 3M14 9l3-4M18 14l7 0" stroke="#c01818"/><text x="7" y="8" font-size="7" fill="#c01818" font-family="Liberation Sans">Z</text><text x="19" y="10" font-size="7" fill="#333" font-family="Liberation Sans">Y</text><text x="25" y="13" font-size="7" fill="#c01818" font-family="Liberation Sans">X</text></svg>
    <svg width="31" height="32"><g fill="#ffd860" stroke="#c89820"><path d="M11 4h7v7h-7z"/><path d="M6 15h8v8H6z"/><path d="M18 15h8v8h-8z"/></g><path d="M13 6h5v5h-5zM8 17h6v6H8zM20 17h6v6h-6z" fill="#f0c040"/></svg>
    <svg width="31" height="32"><path d="M8 14L25 7c3-1 5 1 5 4s-1 5-3 6L10 24z" fill="#9abedc" stroke="#6a88a8" stroke-width=".6"/><ellipse cx="9" cy="19" rx="6" ry="6" fill="#b4cce0" stroke="#5a7898"/><ellipse cx="9" cy="19" rx="3" ry="3" fill="#6c8098"/></svg>
    <svg width="31" height="32"><path d="M5 9l7-3 4 2 7-2 3 12-1 10-7-3-5 3-8-2z" fill="#ffe020" stroke="#1428c8" stroke-width="1.200"/><path d="M16 8v10l-8 2M16 18l9 1M16 18l1 8" stroke="#d01818"/></svg>
    <svg width="31" height="32"><rect x="11" y="6" width="9" height="20" fill="#20d040" stroke="#d01818" stroke-width="1.300"/><path d="M15.500 4v24" stroke="#1428c8" stroke-dasharray="2 1.500"/></svg>
    <svg width="31" height="32"><rect x="11" y="8" width="9" height="16" fill="#10e010" stroke="#111"/><path d="M15.500 3v5M15.500 24v5" stroke="#d01818"/><circle cx="15.500" cy="5" r="1.500" fill="#fff" stroke="#d01818"/><circle cx="15.500" cy="27" r="1.500" fill="#fff" stroke="#d01818"/></svg>
    <svg width="31" height="32"><rect x="5.500" y="10.500" width="20" height="13" fill="#10e010" stroke="#111"/><circle cx="15.500" cy="17" r="1.500" fill="#e01818"/></svg>
    <svg width="31" height="32"><path d="M5 27l6-14h5" fill="none" stroke="#111"/><path d="M4 24l1 3 3-2" fill="#111"/><text x="17" y="12" font-size="7.500" font-weight="700" font-family="Liberation Mono" fill="#8a1010">X=</text><text x="17" y="20" font-size="7.500" font-weight="700" font-family="Liberation Mono" fill="#8a1010">Y=</text><text x="17" y="28" font-size="7.500" font-weight="700" font-family="Liberation Mono" fill="#8a1010">Z=</text></svg>
    <svg width="31" height="32"><path d="M4 13l3 4 6-9M11 16l3 4 6-9M18 20l3 5 6-9" fill="none" stroke="#18c040" stroke-width="2"/></svg>
    <svg width="31" height="32"><path d="M3 11l9-4h14l2 4v12l-8 4H6l-3-3z" fill="#d8e8ff" fill-opacity=".3" stroke="#d82020" stroke-dasharray="2 1"/><path d="M8 15c0-3 3-4 6-4l11-2v11c0 3-3 4-6 4H8z" fill="#4f88e0"/><path d="M8 15l17-6" stroke="#cfe0ff"/></svg>
    <svg width="31" height="32"><path d="M3 11l11-6 12 5v15l-11 5-12-6z" fill="#f8b040" stroke="#d01818"/><path d="M3 11l11-6 12 5-11 5z" fill="#c870e8"/><path d="M15 15l11-5v15l-11 5z" fill="#e0e0e0"/><path d="M18 16h7v5h-7zM18 23h7v5h-7z" fill="#fff" stroke="#111"/></svg>
    <svg width="31" height="32"><rect x="5.500" y="13.500" width="14" height="13" fill="#20a090" stroke="#111" stroke-width="1.300"/><circle cx="20" cy="12" r="7" fill="none" stroke="#111" stroke-width="1.300"/><path d="M3 5h8" stroke="#c81818" stroke-width="1.300"/></svg>
    <svg width="31" height="32"><text x="15.500" y="26" text-anchor="middle" font-size="27" font-weight="400" font-family="Liberation Serif" fill="#111">A</text></svg>
    <svg width="31" height="32"><path d="M4 14C4 7 14 3 22 5c6 2 7 8 4 12-3 3-7 2-9 4-2 3-8 3-10-1-2-2-3-3-3-6z" fill="#f8e0b0" stroke="#90601c"/><circle cx="11" cy="10" r="2" fill="#e02020"/><circle cx="16" cy="7" r="2" fill="#f0a020"/><circle cx="21" cy="9" r="2" fill="#20a020"/><circle cx="23" cy="14" r="2" fill="#e04040"/><path d="M5 28l8-6 4-6 3 3-6 6-1 3-3-1-3 2z" fill="#f0c040" stroke="#90601c" stroke-width=".6"/></svg>
    <svg width="31" height="32"><rect x="4" y="4" width="23" height="24" fill="#c8c8c8" stroke="#808080"/><circle cx="11" cy="15" r="5.500" fill="none" stroke="#b06060"/><circle cx="11" cy="15" r="2.500" fill="none" stroke="#a09040"/><circle cx="20" cy="9" r="4" fill="none" stroke="#60906a"/><circle cx="20" cy="21" r="5" fill="none" stroke="#6060a0"/></svg>
    <svg width="31" height="32"><path d="M4 6l9-3 2 6 4-2-1 8 5-1 7 13-12-9-1 4-5-8-2 2z" fill="#ffe800" stroke="#e01818"/></svg>
    <svg width="12" height="32"><path d="M3 19h7l-3.500 4z"/></svg>
    <div class="w-[2px] h-[33px] border-r border-[#aaa]"></div>
  </div>

  <!-- selection bar -->
  <div class="h-[28px] shrink-0 flex items-center bg-gradient-to-b from-[#e2e2e2] to-[#d2d2d2] border-b-2 border-[#111] pl-[5px] *:shrink-0">
    <div class="w-[116px] h-[18px] bg-white border border-[#888] rounded-[2px] flex items-center justify-between text-[12px]">没有选择过滤器<span class="w-[17px] h-[16px] bg-gradient-to-b from-[#9cc4f0] to-[#4888d0] flex items-center justify-center"><svg width="11" height="7"><path d="M0 0h11L5.500 7z" fill="#111"/></svg></span></div>
    <div class="w-[120px] h-[18px] ml-[8px] bg-white border border-[#888] rounded-[2px] flex items-center justify-between text-[12px]">仅在工作部件内<span class="w-[17px] h-[16px] bg-gradient-to-b from-[#9cc4f0] to-[#4888d0] flex items-center justify-center"><svg width="11" height="7"><path d="M0 0h11L5.500 7z" fill="#111"/></svg></span></div>
    <svg width="23" height="27" class="ml-[2px]"><path d="M4 9h7v9H4zM11 15h7v7h-7z" fill="#aaa" stroke="#888"/><circle cx="14" cy="9" r="3" fill="none" stroke="#999" stroke-width="1.500"/><circle cx="15" cy="15" r="3" fill="none" stroke="#999" stroke-width="1.500"/></svg>
    <div class="w-[12px] flex justify-center"><b class="block w-[2px] h-[24px] border-l border-[#b8b8b8] bg-white"></b></div>
    <svg width="14" height="27"><path d="M2 8l4-3v2h4v3H6v2z" fill="#999"/><path d="M1 16h12l-4 4v4H5v-4z" fill="#b0a890"/></svg>
    <svg width="23" height="27" class="ml-[3px]"><rect x="1.500" y="4.500" width="20" height="19" fill="#ececec" stroke="#c01818"/><path d="M8 10v6M5 13h6" stroke="#333"/><circle cx="8" cy="13" r="2" fill="#e01818"/><path d="M11 15h8l-3 4v3h-2v-3z" fill="#e8b020"/></svg>
    <svg width="11" height="27"><path d="M1 12h7l-3.500 4z"/></svg>
    <svg width="23" height="27"><circle cx="13" cy="16" r="4" fill="none" stroke="#b09090"/><path d="M13 10v12M7 16h12" stroke="#b09090"/><path d="M6 9c2-3 5-3 7-2" fill="none" stroke="#999" stroke-width="1.500"/></svg>
    <svg width="23" height="27"><path d="M4 9l5-2 6 2-2 4H6zM15 13h5v9h-5z" fill="#a8a8a8"/><path d="M9 13v5" stroke="#999" stroke-width="2"/></svg>
    <div class="w-[6px] flex justify-center"><b class="block w-[2px] h-[24px] border-l border-[#b8b8b8] bg-white"></b></div>
    <svg width="23" height="27"><rect x="4.500" y="7.500" width="14" height="13" fill="none" stroke="#222" stroke-dasharray="2 2"/><circle cx="4.500" cy="7.500" r="1.300" fill="#d01818"/><circle cx="18.500" cy="20.500" r="1.300" fill="#d01818"/></svg>
    <svg width="12" height="27"><path d="M2 12h7l-3.500 4z"/></svg>
    <div class="w-[4px] flex justify-center"><b class="block w-[2px] h-[24px] border-l border-[#b8b8b8] bg-white"></b></div>
    <svg width="24" height="27"><path d="M4 14l12-6 5 3-1 6-12 5-4-3z" fill="#e8e8e8" stroke="#444"/><path d="M8 13l8-4 1 2-8 4z" fill="#d08080"/></svg>
    <svg width="24" height="27"><path d="M4 10l9-4 8 3v10l-9 4-8-3z" fill="#cfe4fc" stroke="#4888d8"/><path d="M12 12l9-3v10l-9 4z" fill="#5098e8"/><path d="M4 10l8 3" stroke="#d06060"/></svg>
    <div class="w-[7px] flex justify-center"><b class="block w-[2px] h-[24px] border-l border-[#b8b8b8] bg-white"></b></div>
    <svg width="23" height="27"><use href="#bx" width="23" height="27"/><circle cx="12" cy="14" r="3" fill="#f0c030" stroke="#111" stroke-width=".7"/><circle cx="12" cy="14" r="1" fill="#d01818"/><path d="M4 7l3 2-3 2zM4 17l3 2-3 2z" fill="#18a030"/><path d="M12 6v2M12 20v2M18 14h2M6 14h-2" stroke="#111" stroke-width="1.400" stroke-dasharray="1 1"/></svg>
    <svg width="23" height="27"><use href="#bx" width="23" height="27"/><path d="M5 20L18 8" stroke="#111"/><circle cx="17" cy="9" r="2" fill="#e01818"/></svg>
    <svg width="23" height="27"><use href="#bx" width="23" height="27"/><path d="M5 20L18 8" stroke="#111"/><circle cx="11.500" cy="14" r="2" fill="#e01818"/></svg>
    <svg width="23" height="27"><path d="M5 6c7 0 3 15 13 15" fill="none" stroke="#111" stroke-width="1.300"/><circle cx="11" cy="13" r="1.200" fill="#111"/></svg>
    <svg width="23" height="27"><use href="#bx" width="23" height="27"/><path d="M3 19l5-11 5 12 5-10 3 8" fill="none" stroke="#7030b0"/><circle cx="8" cy="8" r="1.500" fill="#e01818"/><circle cx="13" cy="20" r="1.500" fill="#e01818"/><circle cx="18" cy="11" r="1.500" fill="#e01818"/></svg>
    <svg width="23" height="27"><path d="M3 18c3-6 14-6 17 0M11.500 7v12" fill="none" stroke="#111"/><circle cx="11.500" cy="13" r="1.400" fill="#e01818"/></svg>
    <svg width="23" height="27"><use href="#bx" width="23" height="27"/><circle cx="11.500" cy="14" r="7" fill="none" stroke="#111"/><circle cx="11.500" cy="14" r="1.800" fill="#e01818"/></svg>
    <svg width="23" height="27"><circle cx="11.500" cy="14" r="7" fill="none" stroke="#111"/><g fill="#e01818"><circle cx="11.500" cy="7" r="1.500"/><circle cx="11.500" cy="21" r="1.500"/><circle cx="4.500" cy="14" r="1.500"/><circle cx="18.500" cy="14" r="1.500"/></g></svg>
    <svg width="23" height="27"><use href="#bx" width="23" height="27"/><path d="M5 14h13M11.500 7v14" stroke="#111"/><circle cx="11.500" cy="14" r="1.500" fill="#e01818"/></svg>
    <svg width="23" height="27"><use href="#bx" width="23" height="27"/><path d="M5 20L18 8" stroke="#111"/><circle cx="8" cy="17.500" r="2" fill="#e01818"/></svg>
    <svg width="23" height="27"><path d="M4 10c4-3 10-4 15-3l-1 6c0 3-2 5-4 7-2-3-6-7-10-10z" fill="#a8ccf0" stroke="#456"/><path d="M18 13c-3 0-5-1-7-3" fill="none" stroke="#456"/><circle cx="15" cy="14" r="1.300" fill="#e01818"/></svg>
    <div class="w-[4px] flex justify-center"><b class="block w-[2px] h-[24px] border-l border-[#b8b8b8] bg-white"></b></div>
    <svg width="23" height="27" class="ml-[1px]"><path d="M5 8l11-2 2 14-10 2z" fill="none" stroke="#111"/><path d="M9 7.500l2.500 14M13 7l2.500 14M6 13l11-2M7 17l11-2" stroke="#111"/><circle cx="10" cy="12" r="1" fill="#e01818"/></svg>
    <svg width="12" height="10" class="ml-auto mr-[2px]"><path d="M2 2h7L5.500 6z"/></svg>
  </div>

  <!-- main area -->
  <div class="flex-1 flex min-h-0">

    <!-- 3D viewport -->
    <svg class="w-[1040px] h-[526px] shrink-0 bg-[#23252a]" viewBox="0 180 1040 526" font-family="Liberation Sans">
      <defs>
        <linearGradient id="lc" gradientUnits="userSpaceOnUse" x1="395" y1="420" x2="415" y2="590"><stop offset="0" stop-color="#b4c8cf"/><stop offset=".28" stop-color="#d5e8ef"/><stop offset=".5" stop-color="#a2b4b9"/><stop offset=".73" stop-color="#66757a"/><stop offset=".86" stop-color="#3f474a"/><stop offset="1" stop-color="#566266"/></linearGradient>
        <linearGradient id="rc" gradientUnits="userSpaceOnUse" x1="715" y1="385" x2="600" y2="590"><stop offset="0" stop-color="#9aabb0"/><stop offset=".42" stop-color="#75858a"/><stop offset=".72" stop-color="#485255"/><stop offset="1" stop-color="#3e4649"/></linearGradient>
        <linearGradient id="hl" gradientUnits="userSpaceOnUse" x1="610" y1="365" x2="485" y2="510"><stop offset="0" stop-color="#3c4447"/><stop offset=".5" stop-color="#454e51"/><stop offset="1" stop-color="#8b999d"/></linearGradient>
        <linearGradient id="il" gradientUnits="userSpaceOnUse" x1="600" y1="395" x2="535" y2="525"><stop offset="0" stop-color="#3e4649"/><stop offset=".4" stop-color="#505a5d"/><stop offset="1" stop-color="#7e8d92"/></linearGradient>
        <linearGradient id="sl" gradientUnits="userSpaceOnUse" x1="525" y1="435" x2="530" y2="525"><stop offset="0" stop-color="#3a4245"/><stop offset=".4" stop-color="#6c7a7f"/><stop offset=".8" stop-color="#d8e8ee"/></linearGradient>
        <clipPath id="hc"><circle cx="565" cy="447" r="91"/></clipPath>
      </defs>
      <path d="M359 425L447 415 530 573 382 590C370 560 358 500 355 455 355 440 356 430 359 425z" fill="url(#lc)"/>
      <path d="M620 400L652 358 723 410C750 435 765 470 765 505 765 580 710 632 640 632 610 632 590 622 573 610L500 550z" fill="url(#rc)"/>
      <circle cx="565" cy="447" r="123" fill="#b0c2c8" stroke="#2a2d30" stroke-width=".7"/>
      <g clip-path="url(#hc)">
        <rect x="470" y="350" width="190" height="195" fill="url(#hl)"/>
        <path d="M648 402C625 390 600 384 580 389 540 400 512 435 510 470 508 500 530 525 555 540L660 540 660 404z" fill="url(#il)"/>
        <path d="M643 397C625 383 600 376 580 381 535 390 500 430 503 478 504 505 520 525 545 540L552 540C530 525 507 500 508 470 510 435 540 395 580 386 600 381 625 388 648 403z" fill="#c3d4da"/>
        <path d="M535 430C537 428 536 440 533 455 529 475 528 500 538 533 522 520 509 490 510 465 511 450 525 435 535 430z" fill="url(#sl)"/>
        <path d="M650 410C625 398 600 398 585 404 550 418 530 445 529 475 528 500 535 520 548 536" fill="none" stroke="#2b2f33" stroke-width=".7"/>
        <path d="M660 416C630 418 605 425 587 440 570 452 558 470 554 485 551 503 553 525 557 540L660 540z" fill="#23252a"/>
      </g>
      <circle cx="565" cy="447" r="91" fill="none" stroke="#2a2d30" stroke-width=".8"/>
      <path d="M645 470L683 467" stroke="#d8d8d8"/><path d="M670 468l14-1-13 5z" fill="#c8c8c8"/>
      <g fill="none" stroke="#a86a6a" stroke-width="1">
        <path d="M596 395L603 478"/>
        <path d="M593 433L599 436 637 431 644 470 604 477 603 478 597 438M593 433L598 470 604 477M603 472L642 467"/>
        <path d="M588 470L604 478"/>
      </g>
      <path d="M596 394l3 16h-6z" fill="#a86a6a"/>
      <text x="588" y="395" font-size="12" fill="#b8b8b8">Y</text>
      <text x="687" y="471" font-size="12" fill="#b8b8b8">X</text>
      <text x="586" y="473" font-size="11" fill="#a86a6a">Z</text>
      <!-- view triad -->
      <path d="M43 663V630" stroke="#6fa878" stroke-width="1.500"/><path d="M43 625l2 10h-4z" fill="#1c8a2c"/>
      <path d="M48 656L72 653" stroke="#d02020" stroke-width="1.500"/><path d="M77 652l-10-2 0 5z" fill="#d02020"/>
      <rect x="42" y="634" width="21" height="20" rx="3" transform="rotate(-4 52 644)" fill="#9a9a9a" stroke="#b8b8b8"/>
      <circle cx="46" cy="656" r="4" fill="#c8c8c8"/>
      <text x="37" y="624" font-size="11" fill="#1c8a2c">Y</text><text x="78" y="657" font-size="11" fill="#d02020">X</text><text x="37" y="657" font-size="11" fill="#1c3cd8">Z</text>
    </svg>

    <!-- part navigator -->
    <div class="w-[295px] shrink-0 bg-[#ebebeb] border-l border-[#ccc] flex flex-col">
      <div class="h-[30px] flex items-center pl-[13px]">
        <span class="block w-[13px] h-[11px] border-[1.500px] border-[#111] mr-[12px]"></span>
        <span class="font-bold text-[13px]">部件导航器</span>
      </div>
      <div class="relative ml-[10px] w-[278px] h-[409px] border border-[#808080] bg-white flex flex-col overflow-hidden">
        <div class="h-[17px] flex bg-gradient-to-b from-[#efefef] to-[#c8c8c8] border-b border-[#bbb] shrink-0">
          <div class="w-[200px] pl-[6px] flex items-center gap-[13px] border-r border-[#999] leading-none">名称<svg width="11" height="6"><path d="M5.500 0L11 6H0z" fill="#111"/></svg></div>
          <div class="pl-[6px] leading-none flex items-center">最新</div>
        </div>
        <div class="h-[372px] overflow-hidden shrink-0 *:h-[20px] *:border-b *:border-[#e6e6e6] *:flex *:items-center">
          <div><div class="w-[200px] h-full border-r border-[#e6e6e6] flex items-center pl-[19px]"><svg width="16" height="16" class="mr-[3px]"><circle cx="8" cy="8" r="7" fill="#dbe6f6" stroke="#666"/><path d="M8 3v5h4" fill="none" stroke="#111" stroke-width="1.300"/></svg>历史记录模式</div></div>
          <div class="bg-[#f6f6f6]"><div class="w-[200px] h-full border-r border-[#e6e6e6] flex items-center pl-[4px]"><span class="w-[9px] h-[9px] border border-[#666] bg-white text-[9px] leading-[7px] text-center mr-[6px]">+</span><svg width="16" height="16" class="mr-[3px]"><path d="M2 5l6-3 6 3v7l-6 3-6-3z" fill="#d8f0e0" stroke="#189060"/><path d="M2 5l6 3 6-3M8 8v7" fill="none" stroke="#189060"/><path d="M2 8l6-3 6 3" fill="none" stroke="#189060"/><path d="M10 15l5-3" stroke="#e03020" stroke-width="1.400"/></svg>模型视图</div></div>
          <div><div class="w-[200px] h-full border-r border-[#e6e6e6] flex items-center pl-[4px]"><span class="w-[9px] h-[9px] border border-[#666] bg-white text-[9px] leading-[7px] text-center mr-[6px]">+</span><svg width="13" height="13" class="mr-[3px]"><use href="#ck"/></svg><svg width="16" height="16" class="mr-[3px]"><path d="M2 5l11-3 1 10-11 2z" fill="#fff" stroke="#d82818" stroke-width="1.200"/><circle cx="7" cy="8" r="2.800" fill="#3858c0"/><path d="M11 7h4v6h-4z" fill="#fff" stroke="#111"/></svg>摄像机</div></div>
          <div class="bg-[#f6f6f6]"><div class="w-[200px] h-full border-r border-[#e6e6e6] flex items-center pl-[19px]"><svg width="16" height="16" class="mr-[3px]"><use href="#fo"/><path d="M9 1h6M9 3.500h6" stroke="#3040b0"/></svg>用户表达式</div></div>
          <div><div class="w-[200px] h-full border-r border-[#e6e6e6] flex items-center pl-[4px]"><span class="w-[9px] h-[9px] border border-[#666] bg-white text-[9px] leading-[6px] text-center mr-[6px]">-</span><svg width="16" height="16" class="mr-[3px]"><use href="#fo"/></svg>模型历史记录</div></div>
          <div class="bg-[#f6f6f6]"><div class="w-[200px] h-full border-r border-[#e6e6e6] flex items-center pl-[40px]"><svg width="12" height="12" class="mr-[2px]"><use href="#cb"/></svg><svg width="16" height="16" class="mr-[2px]"><path d="M2 1v7l6 4M2 8l11-5" fill="none" stroke="#333"/><path d="M2 2l1 3M8 12l5 2M8 7l6-3" stroke="#c82020"/><path d="M3 8h6l3 5-5 1z" fill="#bbb" stroke="#444"/></svg>基准坐标系（0）</div><div class="pl-[6px]"><svg width="14" height="14"><use href="#ck"/></svg></div></div>
          <div><div class="w-[200px] h-full border-r border-[#e6e6e6] flex items-center pl-[40px]"><svg width="12" height="12" class="mr-[2px]"><use href="#cb"/></svg><svg width="16" height="16" class="mr-[2px]"><use href="#ex"/></svg>拉伸（1）</div><div class="pl-[6px]"><svg width="14" height="14"><use href="#ck"/></svg></div></div>
          <div class="bg-[#f6f6f6]"><div class="w-[200px] h-full border-r border-[#e6e6e6] flex items-center pl-[40px]"><svg width="12" height="12" class="mr-[2px]"><use href="#cb"/></svg><svg width="16" height="16" class="mr-[2px]"><use href="#ex"/></svg>拉伸（2）</div><div class="pl-[6px]"><svg width="14" height="14"><use href="#ck"/></svg></div></div>
          <div><div class="w-[200px] h-full border-r border-[#e6e6e6] flex items-center pl-[40px]"><svg width="12" height="12" class="mr-[2px]"><use href="#cb"/></svg><svg width="16" height="16" class="mr-[2px]"><path d="M2 1h12v4l-3 2v5l-3 3-3-3V7L2 5z" fill="#8ca8d0" stroke="#405878"/><path d="M6 7v5" stroke="#dfe8f4" stroke-width="1.500"/></svg>沉头孔（3）</div><div class="pl-[6px]"><svg width="14" height="14"><use href="#ck"/></svg></div></div>
          <div class="bg-[#f6f6f6]"><div class="w-[200px] h-full border-r border-[#e6e6e6] flex items-center pl-[40px]"><svg width="12" height="12" class="mr-[2px]"><use href="#cb"/></svg><svg width="16" height="16" class="mr-[2px]"><path d="M1 3c4-2 10-2 14 0l-1 8-3 4H9l-1-5H5L4 11z" fill="#f0a030" stroke="#b05010" stroke-width=".7"/><path d="M4 3h5v8H6L4 8z" fill="#1c48b0"/><path d="M8 1l2 2-2 2" stroke="#d82020" fill="none"/></svg>旋转（4）</div><div class="pl-[6px]"><svg width="14" height="14"><use href="#ck"/></svg></div></div>
          <div><div class="w-[200px] h-full border-r border-[#e6e6e6] flex items-center pl-[40px]"><svg width="12" height="12" class="mr-[2px]"><use href="#cb"/></svg><svg width="16" height="16" class="mr-[2px]"><path d="M1 4l6-3 7 3v8l-6 3-7-3z" fill="#f8b040" stroke="#c05010" stroke-width=".7"/><path d="M1 4l6-3 7 3-6 3z" fill="#c870e8"/><path d="M9 8h5v7H9z" fill="#fff" stroke="#111"/></svg>偏置区域（5）</div><div class="pl-[6px]"><svg width="14" height="14"><use href="#ck"/></svg></div></div>
          <div class="bg-[#f6f6f6]"><div class="w-[200px] h-full border-r border-[#e6e6e6] flex items-center pl-[40px] font-bold"><svg width="12" height="12" class="mr-[2px]"><use href="#cb"/></svg><svg width="16" height="16" class="mr-[2px]"><use href="#ex"/></svg>拉伸（6）</div><div class="pl-[6px]"><svg width="14" height="14"><use href="#ck"/></svg></div></div>
          <div><div class="w-[200px] h-full border-r border-[#e6e6e6]"></div></div>
          <div class="bg-[#f6f6f6]"><div class="w-[200px] h-full border-r border-[#e6e6e6]"></div></div>
          <div><div class="w-[200px] h-full border-r border-[#e6e6e6]"></div></div>
          <div class="bg-[#f6f6f6]"><div class="w-[200px] h-full border-r border-[#e6e6e6]"></div></div>
          <div><div class="w-[200px] h-full border-r border-[#e6e6e6]"></div></div>
          <div class="bg-[#f6f6f6]"><div class="w-[200px] h-full border-r border-[#e6e6e6]"></div></div>
          <div><div class="w-[200px] h-full border-r border-[#e6e6e6]"></div></div>
        </div>
        <div class="h-[18px] flex items-center bg-[#f0f0f0] shrink-0">
          <svg width="17" height="18"><path d="M11 5L7 9l4 4" fill="none" stroke="#444" stroke-width="1.600"/></svg>
          <div class="w-[164px] h-[15px] bg-[#c8c8c8]"></div>
          <svg width="15" height="18" class="ml-auto mr-[3px]"><path d="M5 5l4 4-4 4" fill="none" stroke="#444" stroke-width="1.600"/></svg>
        </div>
        <!-- tree connectors -->
        <svg class="absolute left-0 top-0 pointer-events-none" width="60" height="260"><path d="M9.500 27v80M9.500 27h8M14 47h3M14 67h4M9.500 87h8M28.500 117v130M28.500 127h11M28.500 147h11M28.500 167h11M28.500 187h11M28.500 207h11M28.500 227h11M28.500 247h11" fill="none" stroke="#888" stroke-dasharray="1 1"/></svg>
      </div>
      <div class="h-[12px] ml-[9px] w-[279px] flex items-center gap-[4px]"><b class="flex-1 h-px bg-[#c0c0c0]"></b><b class="block w-[50px] h-[5px] bg-[#d0d0d0] border border-[#aaa]"></b><b class="flex-1 h-px bg-[#c0c0c0]"></b></div>
      <div class="ml-[10px] w-[278px] flex flex-col gap-px *:h-[22px] *:flex *:items-center *:bg-gradient-to-b *:from-[#f4f4f4] *:to-[#d8d8d8] *:border-b *:border-[#999] *:font-bold *:pl-[6px]">
        <div><span class="flex-1 text-[13px]">相依性</span><span class="w-[23px] h-full border-l border-[#aaa] flex items-center justify-center"><svg width="13" height="10"><path d="M1.500 1.500l5 6 5-6" fill="none" stroke="#555" stroke-width="2.400"/></svg></span></div>
        <div><span class="flex-1 text-[13px]">细节</span><span class="w-[23px] h-full border-l border-[#aaa] flex items-center justify-center"><svg width="13" height="10"><path d="M1.500 1.500l5 6 5-6" fill="none" stroke="#555" stroke-width="2.400"/></svg></span></div>
        <div><span class="flex-1 text-[13px]">预览</span><span class="w-[23px] h-full border-l border-[#aaa] flex items-center justify-center"><svg width="13" height="10"><path d="M1.500 1.500l5 6 5-6" fill="none" stroke="#555" stroke-width="2.400"/></svg></span></div>
      </div>
    </div>

    <!-- resource bar -->
    <div class="relative w-[31px] shrink-0 bg-[#b0b0b0] flex flex-col items-start pl-px">
      <div class="h-[44px] -ml-px w-[31px] bg-[#c9c9c9] flex justify-center pt-[6px]"><svg width="18" height="18"><circle cx="9" cy="9" r="5.500" fill="none" stroke="#222" stroke-width="2"/><circle cx="9" cy="9" r="7" fill="none" stroke="#222" stroke-width="1.500" stroke-dasharray="2 3.500"/></svg></div>
      <div class="w-[26px] h-[40px] bg-[#ececec] border border-[#999] rounded-r-[4px] flex items-center justify-center"><svg width="24" height="26"><path d="M3 1h6v6H3zM3 7h6v6H3zM9 7h6v6H9z" fill="#f8c830" stroke="#a87810" stroke-width=".6"/><path d="M6 14v10M6 19h8" stroke="#1428c8" stroke-width="1.300"/><path d="M15 17h6v6h-6z" fill="#f8c830" stroke="#a87810" stroke-width=".6"/><path d="M15 8h7" stroke="#111"/></svg></div>
      <div class="mt-[2px] w-[26px] h-[40px] bg-[#ececec] border border-[#999] rounded-r-[4px] flex items-center justify-center"><svg width="24" height="26"><path d="M3 3l8 6-8 6zM22 3l-8 6 8 6z" fill="#1420b0"/><path d="M12 2v23" stroke="#999" stroke-dasharray="3 2"/><rect x="2" y="16" width="8" height="8" fill="#ffe848" stroke="#111"/><path d="M14 24V14l9 10z" fill="#c81414" stroke="#111" stroke-width=".5"/></svg></div>
      <div class="mt-px w-[28px] h-[43px] bg-[#f4f4f4] border border-[#999] border-r-[#777] rounded-r-[4px] flex items-center justify-center"><svg width="24" height="26"><ellipse cx="7" cy="4" rx="5" ry="2" fill="#d890c0" stroke="#8a2060"/><path d="M2 4v8c0 2 10 2 10 0V4" fill="#d890c0" stroke="#8a2060"/><path d="M14 13h8" stroke="#111"/><path d="M6 15v10M6 20h7" stroke="#1428c8" stroke-width="1.200"/><circle cx="18" cy="20" r="4.500" fill="#fff" stroke="#8a2060" stroke-width="1.200"/><circle cx="18" cy="20" r="1.500" fill="#8a2060"/></svg></div>
      <div class="mt-px w-[26px] h-[40px] bg-[#ececec] border border-[#999] rounded-r-[4px] flex items-center justify-center"><svg width="24" height="26"><path d="M1 7l5-3v18l-5 2z" fill="#f08820" stroke="#905010" stroke-width=".5"/><path d="M8 7l5-3v18l-5 2z" fill="#20c030" stroke="#107020" stroke-width=".5"/><path d="M15 7l6-3v18l-6 2z" fill="#2088e0" stroke="#104880" stroke-width=".5"/><path d="M6 4h2v20H6zM13 4h2v20h-2z" fill="#eee"/></svg></div>
      <div class="mt-[13px] w-[26px] h-[40px] bg-[#ececec] border border-[#999] rounded-r-[4px] flex items-center justify-center"><svg width="24" height="26"><circle cx="10" cy="16" r="8" fill="#2488e8" stroke="#0a50a0"/><text x="10" y="21" text-anchor="middle" font-size="13" font-weight="700" font-family="Liberation Serif" fill="#fff">i</text><path d="M14 6c4 1 6 4 7 7M14 2c5 1 9 5 10 10" fill="none" stroke="#2478d0" stroke-width="2"/></svg></div>
      <div class="mt-[14px] w-[26px] h-[40px] bg-[#ececec] border border-[#999] rounded-r-[4px] flex items-center justify-center"><svg width="24" height="28"><path d="M4 1h11l5 5v20H4z" fill="#fff" stroke="#5070a8"/><circle cx="12" cy="18" r="6" fill="#3a9a48" stroke="#1858a8" stroke-width="1.500"/><circle cx="12" cy="18" r="2.500" fill="#fff"/></svg></div>
      <div class="mt-[14px] w-[26px] h-[40px] bg-[#ececec] border border-[#999] rounded-r-[4px] flex items-center justify-center"><svg width="24" height="24"><circle cx="12" cy="12" r="10" fill="#dbe6f6" stroke="#555" stroke-width="1.500"/><path d="M12 5v7h6" fill="none" stroke="#111" stroke-width="1.500"/></svg></div>
      <div class="mt-[3px] w-[26px] h-[40px] bg-[#ececec] border border-[#999] rounded-r-[4px] flex items-center justify-center"><svg width="24" height="26"><rect x="2" y="2" width="8" height="22" fill="url(#rb)"/><path d="M11 9l10 14" stroke="#111" stroke-width="2.500"/><path d="M13 1l2 4 4 1-4 2-2 4-1-4-4-2 4-1z" fill="#fff"/></svg></div>
      <div class="mt-[2px] w-[26px] h-[40px] bg-[#ececec] border border-[#999] rounded-b-[10px] flex items-center justify-center"><svg width="24" height="26"><path d="M3 4h7v18H3z" fill="#3a7cd0"/><path d="M3 8h7M3 12h7M3 16h7" stroke="#b0d0f0"/><path d="M11 9l10 14" stroke="#111" stroke-width="2.500"/><path d="M14 1l2 4 4 1-4 2-2 4-1-4-4-2 4-1z" fill="#fff"/><path d="M12 4h10" stroke="#3a7cd0"/></svg></div>
      <div class="mt-[4px] ml-[6px] flex flex-col gap-px *:w-[15px] *:h-[15px] *:border *:border-[#ccc] *:bg-[#e8e8e8] *:flex *:items-center *:justify-center">
        <div><svg width="11" height="9"><path d="M1 0h9" stroke="#bbb"/><path d="M5.500 2L10 8H1z" fill="#bbb"/></svg></div>
        <div><svg width="11" height="9"><path d="M5.500 1L10 7H1z" fill="#bbb"/></svg></div>
        <div><svg width="11" height="9"><path d="M1 1h9L5.500 7z" fill="#333"/></svg></div>
        <div><svg width="11" height="9"><path d="M1 0h9L5.500 6z" fill="#333"/><path d="M1 8h9" stroke="#333"/></svg></div>
      </div>
      <!-- volume widget over the bar -->
      <svg class="absolute right-0 top-[433px]" width="11" height="57"><rect width="14" height="57" rx="3" fill="#3a4048"/><path d="M5 4h4M5 7h4M5 10h4M5 13h4M5 16h4M5 19h4M5 22h4M5 25h4M5 28h4M5 31h4" stroke="#15181c"/><path d="M5 34h4M5 37h4M5 40h4M5 43h4M5 46h4M5 49h4" stroke="#70d0b0"/></svg>
    </div>
  </div>

  <!-- status bar -->
  <div class="h-[22px] shrink-0 flex items-center bg-[#d5d5d5] border-t border-[#eee] border-b border-b-[#55503c] font-bold pl-[3px]">
    <span class="w-[1249px] text-[13px] whitespace-nowrap">选择对象并使用 <span class="font-['Liberation_Mono',monospace] text-[12px]">MB3</span>，或者双击某一对象</span>
    <span class="w-[20px] h-full border-l border-[#eee]"></span>
    <span class="w-[76px] h-full border-x border-[#eee] flex items-center gap-[3px] pl-[2px]">
      <svg width="16" height="16"><rect width="16" height="16" fill="#7a909c"/><path d="M3 3l4-1 5 1 1 6-5-1-4 1zM3 3l2 11" fill="#98a0a8" stroke="#555"/></svg>
      <svg width="18" height="18"><path d="M1 5V1h4M13 1h4v4M17 13v4h-4M5 17H1v-4" fill="none" stroke="#888"/><rect x="4.500" y="4" width="9" height="10" fill="#fff" stroke="#333"/><path d="M5 7h8v6H5z" fill="#2878d0"/></svg>
    </span>
  </div>

  <!-- taskbar -->
  <div class="relative h-[40px] shrink-0 flex items-center bg-[linear-gradient(90deg,#bc8a30_0,#ba8330_540px,#b4762f_610px,#a5843f_615px,#9f8244_660px,#bfa775_667px,#c0a87a_1170px,#c4953a_1215px,#bd8f38_1366px)] *:shrink-0">
    <div class="w-[52px] flex justify-center pl-[1px]"><svg width="28" height="26"><path d="M1 4l11-2v10H1zM14 2l13-2v12H14zM1 14h11v10L1 22zM14 14h13v12l-13-2z" fill="#fff"/></svg></div>
    <div class="w-[58px] h-[36px] flex items-center justify-center"><svg width="32" height="28"><path d="M2 5h11l2 2h15v6H2z" fill="#f4e090" stroke="#b09040" stroke-width=".6"/><path d="M4 2h8v3H4zM18 3h10v3H18z" fill="#fff"/><path d="M1 10h30l-1 15H2z" fill="#f8eaa8"/><path d="M7 22v-8h18v8h-4v-4H11v4z" fill="#7cc4e0" stroke="#4888a8" stroke-width=".7"/></svg></div>
    <div class="ml-[4px] w-[58px] h-[38px] border-2 border-[#f0e4cc] bg-[#cfae78] flex items-center justify-center"><svg width="32" height="32"><use href="#nx"/></svg></div>
    <div class="ml-[4px] w-[58px] h-[38px] flex items-center justify-center"><svg width="32" height="30"><path d="M3 3h9c6 2 14 7 19 12-5 5-13 10-19 13H3z" fill="#2a8cf0"/><path d="M3 5l5-2v24l-5-1z" fill="#f08c18"/><path d="M7 8l11 7-11 7z" fill="#fff"/><path d="M8 5c6 2 11 5 15 10H16L8 9z" fill="#48c838"/></svg></div>
    <div class="ml-[4px] w-[58px] h-[38px] flex items-center justify-center"><svg width="30" height="30" viewBox="0 0 30 30"><path d="M15 0a15 15 0 0 1 13 7.500H15a7.500 7.500 0 0 0-6.500 3.800L2 4.500A15 15 0 0 1 15 0z" fill="#e03c30"/><path d="M2 4.500l6.500 11a7.500 7.500 0 0 0 6.500 7L11 30A15 15 0 0 1 2 4.500z" fill="#2c9c48"/><path d="M28 7.500A15 15 0 0 1 11 30l7-11a7.500 7.500 0 0 0-3-11.500z" fill="#f8c020"/><circle cx="15" cy="15" r="6.500" fill="#fff"/><circle cx="15" cy="15" r="5" fill="#3878e8"/></svg></div>
    <div class="ml-[4px] w-[58px] h-[38px] border border-[#dcc89c] bg-[#c49a58] flex items-center justify-center"><svg width="32" height="32"><circle cx="15" cy="18" r="13" fill="#f02e70"/><path d="M22 1c6 5 9 12 8 20-1 6-6 9-11 8 5-2 7-7 5-11-1-4-5-6-8-5 4-3 8-6 6-12z" fill="#fbb01c"/><path d="M2 13c3-4 8-5 13-3-4 1-7 3-6 7-3 0-6-1-7-4z" fill="#f87818"/><circle cx="16" cy="17" r="6.500" fill="#5c3ab0"/></svg></div>
    <div class="ml-[4px] w-[58px] h-[38px] flex items-center justify-center"><div class="w-[32px] h-[32px] rounded-[7px] bg-[#1c8cf0] flex items-center justify-center"><svg width="26" height="26"><circle cx="13" cy="13" r="11" fill="none" stroke="#fff" stroke-width="2"/><path d="M9 7v12M18 7l-6 6 6 6" fill="none" stroke="#fff" stroke-width="3"/></svg></div></div>
    <div class="ml-[4px] w-[58px] h-[38px] flex items-center justify-center"><div class="w-[32px] h-[32px] rounded-[6px] bg-white flex items-center justify-center"><svg width="24" height="24"><circle cx="12" cy="7" r="5" fill="none" stroke="#f04c5c" stroke-width="2.500"/><circle cx="6" cy="15" r="4.500" fill="none" stroke="#30b0f0" stroke-width="2.500"/><circle cx="18" cy="15" r="4.500" fill="none" stroke="#30b0f0" stroke-width="2.500"/><path d="M9 24h6" stroke="#f04c5c" stroke-width="2"/></svg></div></div>

    <div class="ml-auto flex items-center h-full relative w-[212px] *:shrink-0">
      <svg width="10" height="6" class="ml-[1px]"><path d="M5 0l5 6H0z" fill="#fff"/></svg>
      <svg width="16" height="12" class="ml-[11px]"><path d="M1 9h2v3H1zM5 7h2v5H5zM9 4h2v8H9zM13 0h2v12h-2z" fill="#fff" stroke="#554" stroke-width=".5"/></svg>
      <svg width="14" height="16" class="ml-[10px]"><path d="M1 5h3l4-4v14l-4-4H1z" fill="#fff" stroke="#555" stroke-width=".5"/></svg>
      <span class="ml-[12px] text-white text-[13px] leading-none self-start mt-[8px]">中</span>
      <svg width="16" height="16" class="ml-[9px] self-start mt-[8px]"><rect width="16" height="16" rx="2" fill="#e8401c"/><path d="M12 4C8 3 5 4 5 6s6 1 6 4-4 3-7 2" fill="none" stroke="#fff" stroke-width="2"/></svg>
      <span class="absolute right-[25px] top-[3px] text-white text-[14px] leading-[18px] font-['Liberation_Sans',sans-serif]">16:26</span>
      <span class="absolute left-[55px] top-[21px] text-[13px] leading-[17px] text-white/90 whitespace-nowrap [text-shadow:1px_1px_0_#444]">UG<span class="ml-[3px] tracking-[5px]">爱好者论</span><span class="tracking-[1px]">坛@手机</span> f</span>
    </div>
  </div>

  <!-- sogou input bar -->
  <div class="absolute left-[1050px] top-[703px] flex items-center h-[25px] w-[176px] bg-white border border-[#cfe0f4] rounded-r-[2px]">
    <svg width="31" height="31" class="absolute -left-px -top-[6px]"><use href="#sg"/></svg>
    <div class="ml-[33px] flex items-center gap-[7px] *:shrink-0 text-[#0a6cd8]">
      <span class="w-[16px] text-[15px] font-bold leading-none">中</span>
      <svg width="14" height="14" class="ml-[5px]"><circle cx="3" cy="4" r="1.500" fill="#0a6cd8"/><path d="M10 6c1 3 0 6-2 7" fill="none" stroke="#0a6cd8" stroke-width="2"/></svg>
      <svg width="14" height="18" class="ml-[3px]"><rect x="4" y="1" width="6" height="10" rx="3" fill="#0a6cd8"/><path d="M2 8c0 6 10 6 10 0M7 13v4M4 17h6" fill="none" stroke="#0a6cd8" stroke-width="1.300"/></svg>
      <svg width="16" height="14" class="ml-[3px]"><rect x=".5" y=".5" width="15" height="13" rx="2" fill="#0a6cd8"/><path d="M3 4h2M6 4h2M9 4h2M12 4h1M3 7h2M6 7h2M9 7h2M12 7h1M4 10h8" stroke="#fff"/></svg>
      <svg width="18" height="17"><path d="M1 3l5-2h6l5 2-2 5-2-1v9H5V7L3 8z" fill="#7060e8"/></svg>
      <svg width="14" height="14"><rect width="6" height="6" rx="1.500" fill="#0a6cd8"/><rect x="8" width="6" height="6" rx="1.500" fill="#0a6cd8"/><rect y="8" width="6" height="6" rx="1.500" fill="#0a6cd8"/><rect x="8" y="8" width="6" height="6" rx="1.500" fill="#0a6cd8"/></svg>
    </div>
  </div>
</div>
</body>
</html>
